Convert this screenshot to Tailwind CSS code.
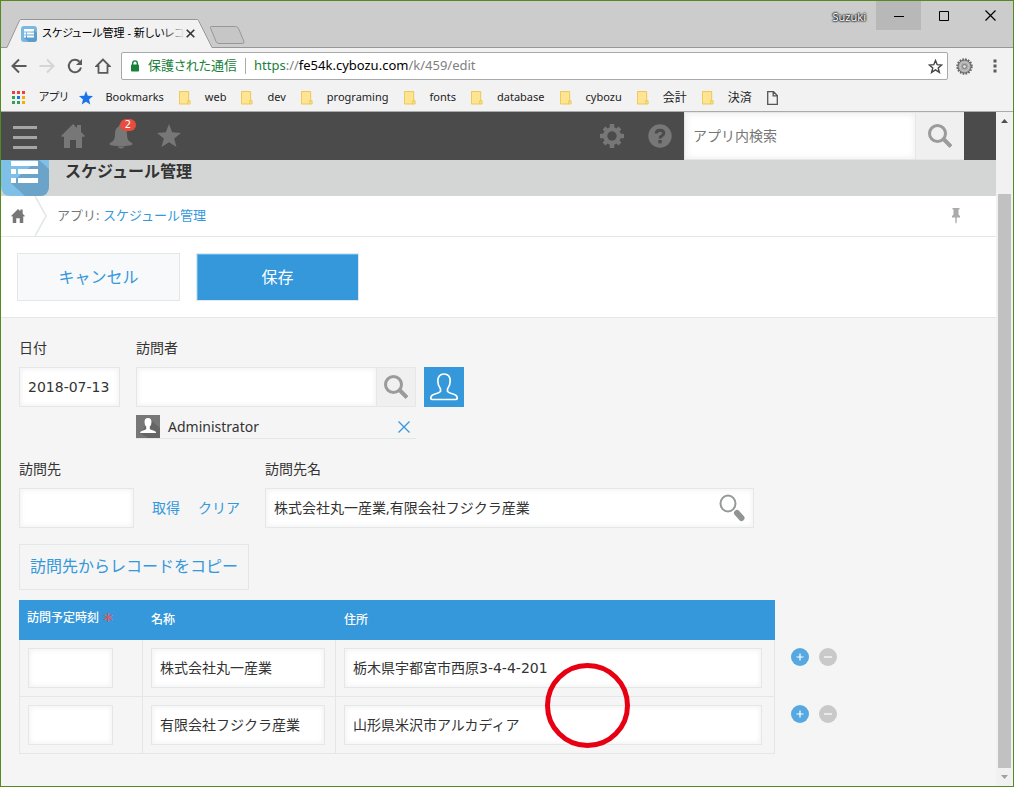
<!DOCTYPE html>
<html lang="ja">
<head>
<meta charset="utf-8">
<title>スケジュール管理 - 新しいレコード</title>
<script src="https://cdn.jsdelivr.net/npm/@tailwindcss/browser@4"></script>
</head>
<body>
<svg class="hidden" aria-hidden="true">
  <symbol id="folder" viewBox="0 0 13 15"><path d="M.5.5h10v10h1.500v3.500H.5z" fill="#ffe492" stroke="#eac54f"/><path d="M9.500 14v-3.500h1.500" fill="none" stroke="#eac54f"/></symbol>
  <symbol id="house" viewBox="0 0 24 24"><path d="M12 0 0 12l1.500 1L3 12.500V24h6v-8h6v8h6V12.500l1.500.5L24 12l-4-4V1h-4v3z" fill="currentColor"/></symbol>
  <symbol id="lens" viewBox="0 0 24 24"><circle cx="9.500" cy="9.500" r="8" fill="none" stroke="currentColor" stroke-width="3"/><path d="m15.500 15 7.500 7.500" stroke="currentColor" stroke-width="4"/></symbol>
  <symbol id="plus" viewBox="0 0 18 18"><circle cx="9" cy="9" r="9" fill="#55a9e0"/><path d="M5.500 9h7M9 5.500v7" stroke="#fff" stroke-width="1.200"/></symbol>
  <symbol id="minus" viewBox="0 0 18 18"><circle cx="9" cy="9" r="9" fill="#c9c9c9"/><path d="M5 9h8" stroke="#fff" stroke-width="1.200"/></symbol>
</svg>

<div class="flex min-h-screen flex-col border border-[#568a20] bg-[#f5f5f5] font-['Noto_Sans','Noto_Sans_CJK_JP',sans-serif] text-[#333]">

  <!-- Tab strip -->
  <div class="flex h-[47px] items-end border-b border-[#979797] bg-[#ccc]">
    <div class="relative -mb-px ml-[5px] h-[29px] w-[207px]">
      <svg class="absolute inset-0" width="207" height="29" viewBox="0 0 207 29" aria-hidden="true"><path d="M0 28.500h1L13.500 1.500q.5-1 1.500-1h176q1 0 1.500 1L206 28.500h1V29H0z" fill="#f2f2f2"/><path d="M0 28.500h1L13.500 1.500q.5-1 1.500-1h176q1 0 1.500 1L206 28.500h1" fill="none" stroke="#979797"/><path d="M2 28.500h203" stroke="#f2f2f2"/></svg>
      <div class="relative flex h-full items-center pl-[15px] pr-[18px]">
        <svg class="shrink-0" width="16" height="16" viewBox="0 0 16 16" aria-hidden="true"><rect width="16" height="16" rx="3" fill="#77b9e3"/><path d="m13 4 3 3v6q0 3-3 3H8l-5-4z" fill="#5c9dc9"/><path d="M3 3h10v2.500H3zM3 6.500h2v2H3zM6 6.500h7v2H6zM3 9.500h2v2H3zM6 9.500h7v2H6z" fill="#fff"/></svg>
        <div class="relative ml-[5px] text-[11px] whitespace-nowrap text-black [font-feature-settings:'palt']">スケジュール管理 - 新しいレコ<span class="absolute inset-y-0 right-0 w-6 bg-linear-to-r from-[#f2f2f2]/0 to-[#f2f2f2]"></span></div>
        <button aria-label="タブを閉じる" class="ml-auto shrink-0"><svg width="9" height="9" viewBox="0 0 9 9"><path d="m.7.7 7.600 7.600M8.300.7.7 8.300" stroke="#333" stroke-width="1.600"/></svg></button>
      </div>
    </div>
    <button aria-label="新しいタブ" class="mb-[3px] -ml-[3px]"><svg width="35" height="18" viewBox="0 0 35 18"><path d="M1.500.5h24q2 0 3 2l5.500 13q.5 2-2 2H9q-2 0-3-2L.5 2Q0 .5 1.500.5z" fill="#c6c6c6" stroke="#979797"/></svg></button>
    <div class="ml-auto flex items-start self-start">
      <span class="mt-2 mr-2.5 text-[11px] leading-4 text-white [text-shadow:0_0_2px_#000,0_0_2px_#000,0_0_2px_#000]">Suzuki</span>
      <button aria-label="最小化" class="flex h-[29px] w-[45px] items-center justify-center bg-[#b8b8b8]"><svg width="10" height="10"><path d="M0 5.500h10" stroke="#000"/></svg></button>
      <button aria-label="最大化" class="flex h-[29px] w-[46px] items-center justify-center"><svg width="10" height="10"><path d="M.5.5h9v9h-9z" fill="none" stroke="#000"/></svg></button>
      <button aria-label="閉じる" class="flex h-[29px] w-[46px] items-center justify-center"><svg width="11" height="11"><path d="m.5.500 10 10m0-10-10 10" stroke="#000" stroke-width="1.200"/></svg></button>
    </div>
  </div>

  <!-- Address bar -->
  <div class="flex items-center bg-[#f2f2f2] pt-1">
    <div class="flex w-[120px] items-center gap-3 pl-2.5">
      <button aria-label="戻る"><svg width="16" height="16" viewBox="0 0 16 16"><path d="M15.500 8H2M8 1.500 1.500 8 8 14.500" fill="none" stroke="#5a5a5a" stroke-width="2"/></svg></button>
      <button aria-label="進む"><svg width="16" height="16" viewBox="0 0 16 16"><path d="M.5 8H14M8 1.500 14.500 8 8 14.500" fill="none" stroke="#d5d5d5" stroke-width="2"/></svg></button>
      <button aria-label="再読み込み"><svg width="16" height="16" viewBox="0 0 16 16"><path d="M14 9.500A6.200 6.200 0 1 1 12.500 3.700" fill="none" stroke="#5a5a5a" stroke-width="2"/><path d="M15 1v6H9z" fill="#5a5a5a"/></svg></button>
      <button aria-label="ホーム"><svg width="16" height="16" viewBox="0 0 16 16"><path d="M8 1.500 1.500 8H3.500v6.800h9V8h2z" fill="none" stroke="#5a5a5a" stroke-width="1.800"/></svg></button>
    </div>
    <div class="flex h-7 flex-1 items-center rounded-xs border border-[#a8a8a8] bg-white pr-1 pl-2">
      <svg width="10" height="12" viewBox="0 0 10 12" aria-hidden="true"><path d="M2.700 5V3.200a2.300 2.300 0 0 1 4.600 0V5" fill="none" stroke="#188038" stroke-width="1.400"/><rect x="1" y="4.500" width="8" height="7" rx=".8" fill="#188038"/></svg>
      <span class="ml-2 text-[13px] text-[#188038] [font-feature-settings:'palt']">保護された通信</span>
      <span class="mx-2 h-4 w-px bg-[#aaa]"></span>
      <div class="flex-1 text-[13px] text-[#808080]"><span class="text-[#188038]">https</span>://<span class="text-black">fe54k.cybozu.com</span>/k/459/edit</div>
      <button aria-label="ブックマークに追加"><svg width="15" height="15" viewBox="0 0 15 15"><path d="m7.500 1.500 1.700 4.200 4.500.3-3.500 2.900 1.200 4.500-3.900-2.500-3.900 2.500 1.200-4.500L1.300 6l4.500-.3z" fill="none" stroke="#444" stroke-width="1.400"/></svg></button>
    </div>
    <button aria-label="拡張機能" class="ml-2"><svg width="17" height="17" viewBox="0 0 17 17"><circle cx="8.500" cy="8.500" r="7.300" fill="none" stroke="#666" stroke-width="1.800" stroke-dasharray="1.700 1.200"/><circle cx="8.500" cy="8.500" r="6.500" fill="#aaa" stroke="#666"/><circle cx="8.500" cy="8.500" r="4.500" fill="none" stroke="#ccc"/><circle cx="8.500" cy="8.500" r="2" fill="#ddd" stroke="#777"/></svg></button>
    <button aria-label="メニュー" class="mr-4 ml-5"><svg width="4" height="14" viewBox="0 0 4 14"><path d="M.5.5h3v3h-3zM.5 5.500h3v3h-3zM.5 10.500h3v3h-3z" fill="#5a5a5a"/></svg></button>
  </div>

  <!-- Bookmarks -->
  <nav aria-label="ブックマーク" class="flex h-8 items-center gap-[15px] border-b border-[#aaa] bg-[#f2f2f2] pt-1 pl-[11px] text-[11px] whitespace-nowrap text-[#222]">
    <a href="#" class="flex items-center gap-3.5 [font-feature-settings:'palt']"><svg width="13" height="13" viewBox="0 0 13 13"><path d="M0 0h3v3H0zM5 0h3v3H5zM10 0h3v3h-3z" fill="#ea4335"/><path d="M0 5h3v3H0zM0 10h3v3H0zM5 10h3v3H5z" fill="#34a055"/><path d="M5 5h3v3H5z" fill="#1a73e8"/><path d="M10 5h3v3h-3zM10 10h3v3h-3z" fill="#fbab05"/></svg>アプリ</a>
    <a href="#" class="-ml-1 flex items-center gap-3"><svg width="14" height="14" viewBox="0 0 14 14"><path d="m7 0 1.800 4.800 5.200.3-4 3.300L11.300 13.500 7 10.700l-4.300 2.800L4 8.400 0 5.100l5.200-.3z" fill="#1a73e8"/></svg>Bookmarks</a>
    <a href="#" class="flex items-center gap-3.5"><svg width="12" height="14"><use href="#folder"/></svg>web</a>
    <a href="#" class="flex items-center gap-3.5"><svg width="12" height="14"><use href="#folder"/></svg>dev</a>
    <a href="#" class="flex items-center gap-3.5"><svg width="12" height="14"><use href="#folder"/></svg>programing</a>
    <a href="#" class="flex items-center gap-3.5"><svg width="12" height="14"><use href="#folder"/></svg>fonts</a>
    <a href="#" class="flex items-center gap-3.5"><svg width="12" height="14"><use href="#folder"/></svg>database</a>
    <a href="#" class="flex items-center gap-3.5"><svg width="12" height="14"><use href="#folder"/></svg>cybozu</a>
    <a href="#" class="flex items-center gap-3.5 text-xs"><svg width="12" height="14"><use href="#folder"/></svg>会計</a>
    <a href="#" class="flex items-center gap-3.5 text-xs"><svg width="12" height="14"><use href="#folder"/></svg>決済</a>
    <a href="#" aria-label="ページ"><svg width="11" height="14" viewBox="0 0 11 14"><path d="M.7.7h5.800l3.800 3.800v8.800H.7zM6.200.7v4.100h4.100" fill="none" stroke="#555" stroke-width="1.300"/></svg></a>
  </nav>

  <!-- Page viewport -->
  <div class="flex flex-1">
    <div class="min-w-0 flex-1">
      <header class="flex h-12 items-center bg-[#4b4b4b] text-[#777]">
        <button aria-label="メニュー" class="flex size-12 items-center justify-center"><svg width="24" height="24" viewBox="0 0 24 24" class="mt-1"><path d="M0 1.500h24M0 11.500h24M0 21.500h24" stroke="#a5a5a5" stroke-width="3"/></svg></button>
        <a href="#" aria-label="ポータル" class="flex size-12 items-center justify-center"><svg width="24" height="24"><use href="#house"/></svg></a>
        <button aria-label="通知" class="relative flex size-12 items-center justify-center"><svg width="24" height="25" viewBox="0 0 24 25"><path d="M12 0q2 0 2 2.200Q18 4 18 10q0 5.500 2.500 7.500L23.500 19.500v1q-3 1.500-11.500 1.500T.5 20.500v-1l3-2Q6 15.500 6 10q0-6 4-7.800Q10 0 12 0zM8.500 22.500h7q-1 2-3.500 2t-3.500-2z" fill="#777"/></svg><span class="absolute top-[7px] left-[23px] flex h-3 w-4 items-center justify-center rounded-full bg-[#e74c3c] font-['DejaVu_Sans',sans-serif] text-[10px] leading-none text-white">2</span></button>
        <button aria-label="お気に入り" class="flex size-12 items-center justify-center"><svg width="24" height="24" viewBox="0 0 24 24"><path d="m12 0 3.200 8.300 8.800.6-6.800 5.500L19.500 23 12 18.300 4.500 23l2.300-8.600L0 8.900l8.800-.6z" fill="#777"/></svg></button>
        <button aria-label="設定" class="ml-auto flex size-12 items-center justify-center"><svg width="24" height="24" viewBox="0 0 24 24"><g stroke="#777" stroke-width="4.500"><path d="M12 0v24M0 12h24"/><path d="m4 4 16 16M20 4 4 20" stroke-width="4"/></g><circle cx="12" cy="12" r="9" fill="#777"/><circle cx="12" cy="12" r="4.700" fill="#4b4b4b"/></svg></button>
        <button aria-label="ヘルプ" class="flex size-12 items-center justify-center"><svg width="24" height="24" viewBox="0 0 24 24"><circle cx="12" cy="12" r="11.700" fill="#777"/><path d="M8.200 9.500Q8.200 6.200 12 6.200t3.800 3q0 1.600-2 2.700-1.800 1-1.800 2.600" fill="none" stroke="#4b4b4b" stroke-width="3"/><path d="M10.400 16h3.300v3.300h-3.300z" fill="#4b4b4b"/></svg></button>
        <form class="mr-8 flex h-12" role="search">
          <input type="text" aria-label="アプリ内検索" placeholder="アプリ内検索" class="w-[232px] border border-[#e3e7e8] bg-white px-2 text-sm placeholder-[#777] shadow-[inset_2px_2px_6px_#f0f0f0,inset_-2px_-2px_6px_#f5f5f5]">
          <button type="button" aria-label="検索" class="flex w-12 items-center justify-center border-y border-[#e3e7e8] bg-[#f0f0f0] text-[#9b9b9b]"><svg width="24" height="24"><use href="#lens"/></svg></button>
        </form>
      </header>

      <div class="flex h-9 bg-[#d4d6d6]">
        <svg width="48" height="36" viewBox="0 0 48 36" aria-hidden="true"><path d="M0 0h48v26q0 10-10 10H10Q0 36 0 26z" fill="#7fc0e8"/><path d="M37 0h1l10 9v17q0 10-10 10H24L10 23z" fill="#6ba3c9"/><path d="M10 1h27v5H10zM10 9h5v5h-5zM17 9h20v5H17zM10 18h5v5h-5zM17 18h20v5H17z" fill="#fff"/></svg>
        <h1 class="ml-4 text-base leading-[22px] font-bold">スケジュール管理</h1>
      </div>

      <nav aria-label="パンくず" class="flex h-[41px] items-center border-b border-[#e3e7e8] bg-white text-[13px]">
        <a href="#" aria-label="ホーム" class="ml-2.5 text-[#777]"><svg width="14" height="14"><use href="#house"/></svg></a>
        <svg width="12" height="40" viewBox="0 0 12 40" class="ml-2.5" aria-hidden="true"><path d="m0 0 11 20L0 40" fill="none" stroke="#e0e5e6" stroke-width="1.500"/></svg>
        <span class="ml-2.5 text-[#777]">アプリ: <a href="#" class="text-[#3498db]">スケジュール管理</a></span>
        <button aria-label="固定する" class="mr-9 ml-auto"><svg width="8" height="16" viewBox="0 0 8 16"><path d="M.5 0h7v1.500h-1v5L8 8v1.500H4.700V14L4 16l-.7-2V9.500H0V8l1.500-1.500v-5h-1z" fill="#aaa"/></svg></button>
      </nav>

      <div class="flex gap-4 border-b border-[#e3e7e8] bg-white p-4 text-base">
        <button class="h-12 w-[163px] border border-[#e3e7e8] bg-[#f7f9fa] text-[#3498db]">キャンセル</button>
        <button class="h-12 w-[163px] border border-[#e3e7e8] bg-[#3498db] text-white shadow-[inset_1px_1px_0_#5fb9ee]">保存</button>
      </div>

      <form class="px-[18px] text-sm leading-5">
        <div class="flex gap-4 pt-5">
          <div class="flex w-[101px] flex-col gap-[9px]">
            <label for="date">日付</label>
            <input id="date" type="text" value="2018-07-13" class="h-10 w-full border border-[#e3e7e8] bg-white px-2 font-['DejaVu_Sans',sans-serif] shadow-[inset_2px_2px_4px_#f5f5f5,inset_-2px_-2px_4px_#f5f5f5]">
          </div>
          <div class="flex flex-col gap-[9px]">
            <label for="visitor">訪問者</label>
            <div class="flex">
              <input id="visitor" type="text" class="h-10 w-[241px] border border-[#e3e7e8] bg-white px-2 shadow-[inset_2px_2px_4px_#f5f5f5,inset_-2px_-2px_4px_#f5f5f5]">
              <button type="button" aria-label="検索" class="flex h-10 w-[39px] items-center justify-center border border-l-0 border-[#e3e7e8] bg-[#f0f0f0] text-[#9b9b9b]"><svg width="24" height="24"><use href="#lens"/></svg></button>
              <button type="button" aria-label="ユーザーを選択" class="ml-2 flex size-10 items-center justify-center bg-[#3498db]"><svg width="28" height="28" viewBox="0 0 28 28"><path d="M14 1c4.200 0 6.200 3 6.200 7 0 3.500-1.200 6-2.700 8v2.500q1.500 1.500 5.500 2.500t4.200 4q0 1.500-1.500 1.500H2.300Q.8 26.500.8 25 1 22 5 21t5.500-2.500V16c-1.500-2-2.700-4.500-2.700-8 0-4 2-7 6.200-7z" fill="none" stroke="#fff" stroke-width="1.700"/></svg></button>
            </div>
            <div class="-mt-px flex h-6 w-[280px] items-center border-b border-[#e3e7e8]">
              <svg width="24" height="23" viewBox="0 0 24 23" aria-hidden="true"><path d="M0 0h24v23H0z" fill="#777"/><path d="m15 5 9 8v10H12l-8-5z" fill="#666"/><path d="M12 3q3.500 0 3.500 4 0 3-1.700 4.500V14q.5.800 3.500 1.500T20 18H4q0-1.800 3-2.500t3.200-1.500v-2.500Q8.500 10 8.500 7q0-4 3.500-4z" fill="#fff"/></svg>
              <span class="ml-2">Administrator</span>
              <button type="button" aria-label="削除" class="mr-1.5 ml-auto"><svg width="12" height="12" viewBox="0 0 12 12"><path d="m.5.500 11 11m0-11-11 11" stroke="#3498db" stroke-width="1.300"/></svg></button>
            </div>
          </div>
        </div>

        <div class="flex pt-5">
          <div class="flex w-[246px] flex-col gap-[9px]">
            <label for="dest">訪問先</label>
            <div class="flex items-center gap-[18px] text-[#3498db]">
              <input id="dest" type="text" class="h-10 w-[115px] border border-[#e3e7e8] bg-white px-2 text-[#333] shadow-[inset_2px_2px_4px_#f5f5f5,inset_-2px_-2px_4px_#f5f5f5]">
              <button type="button">取得</button>
              <button type="button">クリア</button>
            </div>
          </div>
          <div class="flex flex-col gap-[9px]">
            <label for="destname">訪問先名</label>
            <div class="flex h-10 w-[489px] items-center border border-[#e3e7e8] bg-white pr-2 shadow-[inset_2px_2px_4px_#f5f5f5,inset_-2px_-2px_4px_#f5f5f5]">
              <input id="destname" type="text" value="株式会社丸一産業,有限会社フジクラ産業" class="h-full min-w-0 flex-1 bg-transparent px-2 pb-0.5">
              <button type="button" aria-label="訪問先名を検索"><svg width="26" height="28" viewBox="0 0 26 28"><ellipse cx="9" cy="9.500" rx="7.500" ry="8" fill="none" stroke="#959a98" stroke-width="2"/><path d="m18 19 4.500 5" stroke="#909593" stroke-width="6" stroke-linecap="round"/></svg></button>
            </div>
          </div>
        </div>

        <button type="button" class="mt-4 h-[46px] w-[230px] border border-[#e3e7e8] pb-0.5 text-base text-[#3498db]">訪問先からレコードをコピー</button>

        <div class="relative mt-2.5">
          <table class="border-separate border-spacing-0 text-left">
            <thead>
              <tr class="h-10 text-xs text-white">
                <th class="w-[124px] bg-[#3498db] px-2 py-0 font-medium whitespace-nowrap"><div class="flex items-start gap-1 leading-4">訪問予定時刻<span class="font-['DejaVu_Sans',sans-serif] text-xl leading-none font-normal text-[#f0504a]">*</span></div></th>
                <th class="w-[193px] bg-[#3498db] px-2 font-medium">名称</th>
                <th class="w-[439px] bg-[#3498db] px-2 font-medium">住所</th>
                <td></td>
              </tr>
            </thead>
            <tbody>
              <tr>
                <td class="border-x border-b border-[#e3e7e8] p-2"><input type="text" aria-label="訪問予定時刻 1" class="block h-10 w-[85px] border border-[#e3e7e8] bg-white px-2 shadow-[inset_2px_2px_4px_#f5f5f5,inset_-2px_-2px_4px_#f5f5f5]"></td>
                <td class="border-r border-b border-[#e3e7e8] p-2"><input type="text" aria-label="名称 1" value="株式会社丸一産業" class="block h-10 w-[174px] border border-[#e3e7e8] bg-white px-2 pb-0.5 shadow-[inset_2px_2px_4px_#f5f5f5,inset_-2px_-2px_4px_#f5f5f5]"></td>
                <td class="border-r border-b border-[#e3e7e8] p-2"><input type="text" aria-label="住所 1" value="栃木県宇都宮市西原3-4-4-201" class="block h-10 w-[418px] border border-[#e3e7e8] bg-white px-2 pb-0.5 font-['DejaVu_Sans','Noto_Sans_CJK_JP',sans-serif] shadow-[inset_2px_2px_4px_#f5f5f5,inset_-2px_-2px_4px_#f5f5f5]"></td>
                <td class="py-2 pl-4 align-top"><div class="flex gap-2.5"><button type="button" aria-label="行を追加"><svg width="18" height="18"><use href="#plus"/></svg></button><button type="button" aria-label="行を削除"><svg width="18" height="18"><use href="#minus"/></svg></button></div></td>
              </tr>
              <tr>
                <td class="border-x border-b border-[#e3e7e8] p-2"><input type="text" aria-label="訪問予定時刻 2" class="block h-10 w-[85px] border border-[#e3e7e8] bg-white px-2 shadow-[inset_2px_2px_4px_#f5f5f5,inset_-2px_-2px_4px_#f5f5f5]"></td>
                <td class="border-r border-b border-[#e3e7e8] p-2"><input type="text" aria-label="名称 2" value="有限会社フジクラ産業" class="block h-10 w-[174px] border border-[#e3e7e8] bg-white px-2 pb-0.5 shadow-[inset_2px_2px_4px_#f5f5f5,inset_-2px_-2px_4px_#f5f5f5]"></td>
                <td class="border-r border-b border-[#e3e7e8] p-2"><input type="text" aria-label="住所 2" value="山形県米沢市アルカディア" class="block h-10 w-[418px] border border-[#e3e7e8] bg-white px-2 pb-0.5 shadow-[inset_2px_2px_4px_#f5f5f5,inset_-2px_-2px_4px_#f5f5f5]"></td>
                <td class="py-2 pl-4 align-top"><div class="flex gap-2.5"><button type="button" aria-label="行を追加"><svg width="18" height="18"><use href="#plus"/></svg></button><button type="button" aria-label="行を削除"><svg width="18" height="18"><use href="#minus"/></svg></button></div></td>
              </tr>
            </tbody>
          </table>
          <div class="pointer-events-none absolute top-[63px] left-[526px] size-[85px] rounded-full border-5 border-[#e60012]"></div>
        </div>
      </form>
    </div>

    <!-- Scrollbar -->
    <div class="flex w-[17px] flex-col items-center bg-[#f1f1f1]" aria-hidden="true">
      <svg width="7" height="4" viewBox="0 0 7 4" class="mt-[7px] mb-[71px]"><path d="M0 4 3.500 0 7 4z" fill="#505050"/></svg>
      <div class="w-[13px] flex-1 bg-[#c1c1c1]"></div>
      <svg width="7" height="4" viewBox="0 0 7 4" class="my-[7px]"><path d="M0 0h7L3.500 4z" fill="#a0a0a0"/></svg>
    </div>
  </div>
</div>
</body>
</html>
